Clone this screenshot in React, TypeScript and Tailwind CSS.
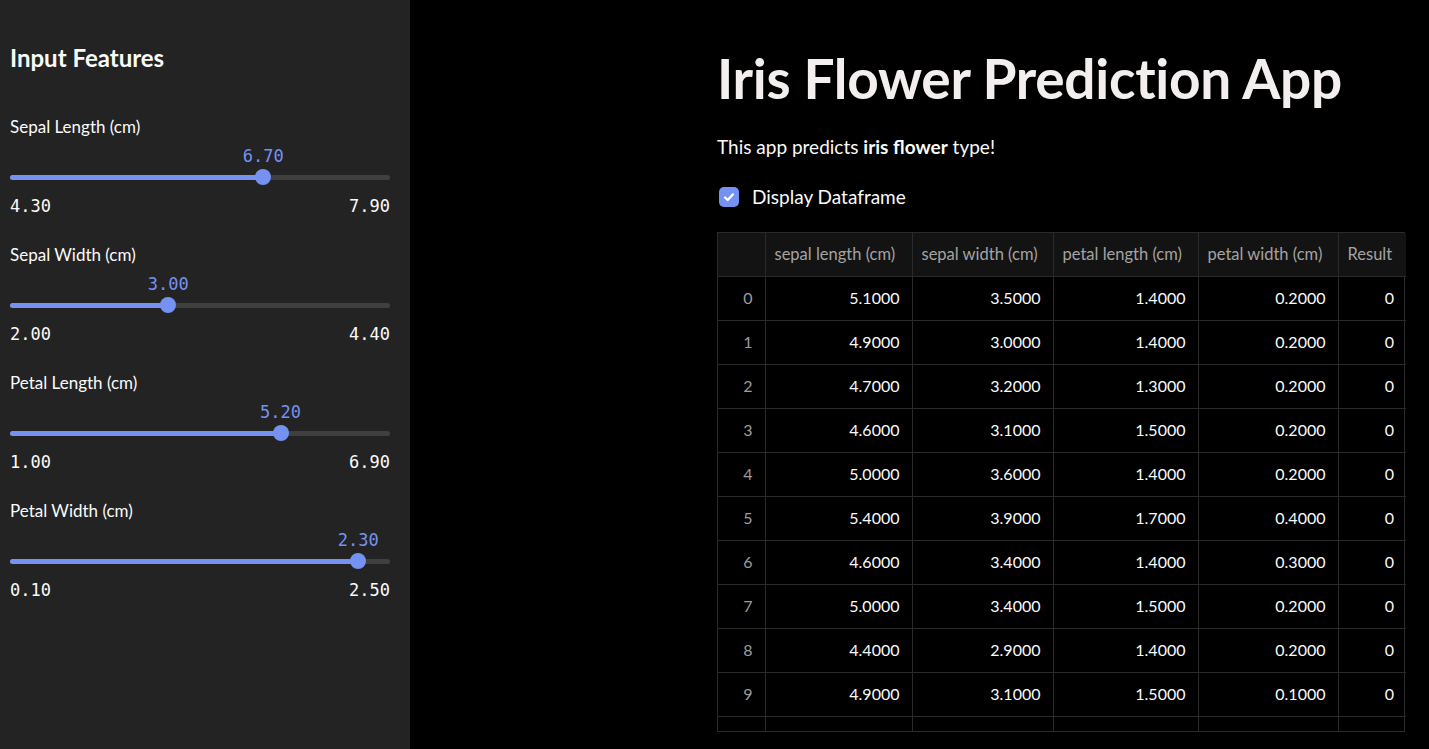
import React from 'react';

const sliders = [
  { label: 'Sepal Length (cm)', min: 4.3, max: 7.9, value: 6.7 },
  { label: 'Sepal Width (cm)', min: 2.0, max: 4.4, value: 3.0 },
  { label: 'Petal Length (cm)', min: 1.0, max: 6.9, value: 5.2 },
  { label: 'Petal Width (cm)', min: 0.1, max: 2.5, value: 2.3 },
];

const columns = ['sepal length (cm)', 'sepal width (cm)', 'petal length (cm)', 'petal width (cm)', 'Result'];
const widths = [47, 147, 141, 145, 140, 68];

const rows = [
  [5.1, 3.5, 1.4, 0.2],
  [4.9, 3.0, 1.4, 0.2],
  [4.7, 3.2, 1.3, 0.2],
  [4.6, 3.1, 1.5, 0.2],
  [5.0, 3.6, 1.4, 0.2],
  [5.4, 3.9, 1.7, 0.4],
  [4.6, 3.4, 1.4, 0.3],
  [5.0, 3.4, 1.5, 0.2],
  [4.4, 2.9, 1.4, 0.2],
  [4.9, 3.1, 1.5, 0.1],
];

const Slider = ({ label, min, max, value }: { label: string; min: number; max: number; value: number }) => {
  const pct = ((value - min) / (max - min)) * 100;
  return (
    <div className="h-[128px]">
      <div className="h-6 leading-6 text-[17px] text-[#fafafa]">{label}</div>
      {/* значение над ползунком */}
      <div className="relative mt-[6px] h-[22px]">
        <span
          className="absolute top-0 -translate-x-1/2 font-['DejaVu_Sans_Mono',monospace] text-[17px] leading-[22px] text-[#7592f3]"
          style={{ left: `${pct}%` }}
        >
          {value.toFixed(2)}
        </span>
      </div>
      <div className="relative mt-[2px] h-4 flex items-center">
        <div className="h-[5px] w-full rounded-full bg-[#3f3f3f]" />
        <div className="absolute left-0 h-[5px] rounded-full bg-[#7592f3]" style={{ width: `${pct}%` }} />
        <div
          className="absolute top-0 h-4 w-4 rounded-full bg-[#7592f3]"
          style={{ left: `calc(${pct}% - 8px)` }}
        />
      </div>
      <div className="mt-[10px] h-[22px] flex justify-between font-['DejaVu_Sans_Mono',monospace] text-[17px] leading-[22px] text-[#fafafa]">
        <span>{min.toFixed(2)}</span>
        <span>{max.toFixed(2)}</span>
      </div>
    </div>
  );
};

const App = () => {
  return (
    <div className="h-[749px] flex bg-black font-['Lato',sans-serif] overflow-hidden">
      {/* Сайдбар */}
      <aside className="w-[410px] shrink-0 bg-[#232323] pl-[10px] pr-[20px] pt-[42px]">
        <h2 className="h-8 leading-8 text-[24px] font-bold text-[#fafafa]">Input Features</h2>
        <div className="mt-[41px]">
          {sliders.map((s) => (
            <Slider key={s.label} {...s} />
          ))}
        </div>
      </aside>

      {/* Основная часть */}
      <main className="flex-1 pl-[307px] pt-[46px]">
        <div className="w-[688px]">
          <h1 className="h-16 leading-[64px] text-[55px] font-bold text-[#f3efef] tracking-[-0.3px]">
            Iris Flower Prediction App
          </h1>
          <p className="mt-[23px] h-7 leading-7 text-[19px] text-[#fafafa]">
            This app predicts <b className="font-bold">iris flower</b> type!
          </p>
          <label className="mt-[22px] h-7 flex items-center gap-[13px] text-[19px] text-[#fafafa]">
            <span className="ml-[2px] w-5 h-5 rounded-[5px] bg-[#7592f3] flex items-center justify-center">
              <svg viewBox="0 0 16 16" className="w-[14px] h-[14px]" fill="none" stroke="white" strokeWidth="2.6" strokeLinecap="round" strokeLinejoin="round">
                <path d="M3.5 8.5l3 3 6-6.5" />
              </svg>
            </span>
            Display Dataframe
          </label>

          {/* Таблица */}
          <div className="mt-[21px] border border-[#2a2a2a]">
            <table className="border-collapse table-fixed w-[686px] text-[16px]">
              <colgroup>
                {widths.map((w, i) => (
                  <col key={i} style={{ width: w }} />
                ))}
              </colgroup>
              <thead>
                <tr className="h-[43px] bg-[#131313]">
                  <th className="border-r border-b border-[#2a2a2a]" />
                  {columns.map((c, i) => (
                    <th
                      key={c}
                      className={`px-[9px] text-left text-[16.5px] font-normal text-[#a3a3a3] whitespace-nowrap border-b border-[#2a2a2a] ${i < columns.length - 1 ? 'border-r' : ''}`}
                    >
                      {c}
                    </th>
                  ))}
                </tr>
              </thead>
              <tbody>
                {rows.map((r, idx) => (
                  <tr key={idx} className="h-[44px]">
                    <td className="pr-[12px] text-right text-[#9c9c9c] border-r border-b border-[#2a2a2a]">{idx}</td>
                    {r.map((v, j) => (
                      <td key={j} className="pr-[12px] text-right text-[#fafafa] border-r border-b border-[#2a2a2a]">
                        {v.toFixed(4)}
                      </td>
                    ))}
                    <td className="pr-[12px] text-right text-[#fafafa] border-b border-[#2a2a2a]">0</td>
                  </tr>
                ))}
                <tr className="h-[15px]">
                  <td className="border-r border-[#2a2a2a]" />
                  <td className="border-r border-[#2a2a2a]" />
                  <td className="border-r border-[#2a2a2a]" />
                  <td className="border-r border-[#2a2a2a]" />
                  <td className="border-r border-[#2a2a2a]" />
                  <td />
                </tr>
              </tbody>
            </table>
          </div>
        </div>
      </main>
    </div>
  );
};

export default App;
